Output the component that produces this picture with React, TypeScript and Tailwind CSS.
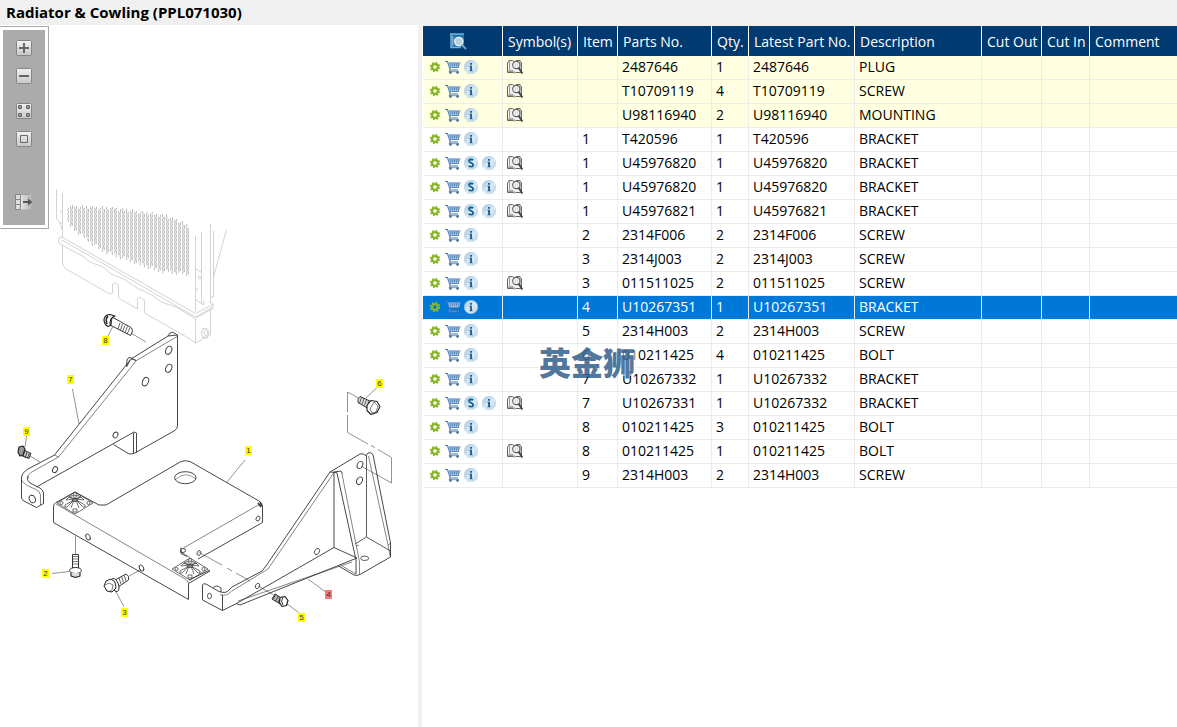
import React, { useState } from 'react';

type Part = {
  symbol?: boolean;
  superseded?: boolean;
  general?: boolean;
  item: string;
  partNo: string;
  qty: string;
  latest: string;
  description: string;
};

const parts: Part[] = [
  { general: true, symbol: true, item: '', partNo: '2487646', qty: '1', latest: '2487646', description: 'PLUG' },
  { general: true, symbol: true, item: '', partNo: 'T10709119', qty: '4', latest: 'T10709119', description: 'SCREW' },
  { general: true, symbol: true, item: '', partNo: 'U98116940', qty: '2', latest: 'U98116940', description: 'MOUNTING' },
  { item: '1', partNo: 'T420596', qty: '1', latest: 'T420596', description: 'BRACKET' },
  { symbol: true, superseded: true, item: '1', partNo: 'U45976820', qty: '1', latest: 'U45976820', description: 'BRACKET' },
  { symbol: true, superseded: true, item: '1', partNo: 'U45976820', qty: '1', latest: 'U45976820', description: 'BRACKET' },
  { symbol: true, superseded: true, item: '1', partNo: 'U45976821', qty: '1', latest: 'U45976821', description: 'BRACKET' },
  { item: '2', partNo: '2314F006', qty: '2', latest: '2314F006', description: 'SCREW' },
  { item: '3', partNo: '2314J003', qty: '2', latest: '2314J003', description: 'SCREW' },
  { symbol: true, item: '3', partNo: '011511025', qty: '2', latest: '011511025', description: 'SCREW' },
  { item: '4', partNo: 'U10267351', qty: '1', latest: 'U10267351', description: 'BRACKET' },
  { item: '5', partNo: '2314H003', qty: '2', latest: '2314H003', description: 'SCREW' },
  { item: '6', partNo: '010211425', qty: '4', latest: '010211425', description: 'BOLT' },
  { item: '7', partNo: 'U10267332', qty: '1', latest: 'U10267332', description: 'BRACKET' },
  { symbol: true, superseded: true, item: '7', partNo: 'U10267331', qty: '1', latest: 'U10267332', description: 'BRACKET' },
  { item: '8', partNo: '010211425', qty: '3', latest: '010211425', description: 'BOLT' },
  { symbol: true, item: '8', partNo: '010211425', qty: '1', latest: '010211425', description: 'BOLT' },
  { item: '9', partNo: '2314H003', qty: '2', latest: '2314H003', description: 'SCREW' },
];

const headings = ['Symbol(s)', 'Item', 'Parts No.', 'Qty.', 'Latest Part No.', 'Description', 'Cut Out', 'Cut In', 'Comment'];

const callouts = [
  { n: '8', x: 106, y: 341 },
  { n: '7', x: 71, y: 380 },
  { n: '6', x: 380, y: 384 },
  { n: '9', x: 27, y: 432 },
  { n: '1', x: 249, y: 451 },
  { n: '2', x: 46, y: 574 },
  { n: '4', x: 329, y: 595 },
  { n: '3', x: 125, y: 613 },
  { n: '5', x: 302, y: 618 },
];

const GearIcon = () => (
  <svg width="12" height="12" viewBox="0 0 12 12" fill="none">
    <circle cx="6" cy="6" r="4.4" stroke="#8cbd32" strokeWidth="1.8" strokeDasharray="1.75 1.7" />
    <circle cx="6" cy="6" r="2.9" stroke="#83b52a" strokeWidth="2.2" />
  </svg>
);

const CartIcon = () => (
  <svg width="16" height="14" viewBox="0 0 16 14" fill="none">
    <path d="M0 1.500h2.500l2.700 8.500H13" stroke="#4a78ae" strokeWidth="1.200" />
    <path d="M3 2.500h12.500L13.800 8H4.800z" fill="#c3d6ea" />
    <path d="M3 3h12.500M3.800 5h11M4.500 7.500h9.500" stroke="#5684ba" strokeWidth=".9" />
    <path d="M5.500 3v4.500M7.500 3v4.500M9.500 3v4.500M11.500 3v4.500M13.500 3v4.500" stroke="#5684ba" strokeWidth=".7" />
    <path d="M5 9.500l-1 2.200h10" stroke="#6f96c2" />
    <circle cx="5.500" cy="12.500" r="1.300" fill="#3f6ca3" />
    <circle cx="12.500" cy="12.500" r="1.300" fill="#3f6ca3" />
  </svg>
);

const InfoIcon = () => (
  <svg width="14" height="14" viewBox="0 0 14 14">
    <circle cx="7" cy="7" r="6.8" fill="url(#disc)" stroke="#a5c6de" strokeWidth=".5" />
    <path d="M6 3h2v1.800H6zM5.400 5.800H8v4.400h.6v1H5.400v-1H6V6.800h-.6z" fill="#2d6095" />
  </svg>
);

const SupersededIcon = () => (
  <svg width="14" height="14" viewBox="0 0 14 14">
    <circle cx="7" cy="7" r="6.8" fill="url(#disc)" stroke="#a5c6de" strokeWidth=".5" />
    <path d="M9.300 4.200C8.500 3.400 5 2.900 5 5c0 2 4.200 1.600 4.200 3.800 0 2.400-3.400 2.100-4.700 1.100" fill="none" stroke="#0d659d" strokeWidth="1.800" />
  </svg>
);

const BookIcon = () => (
  <svg width="16" height="16" viewBox="0 0 16 16" fill="none">
    <path d="M.5 3.500L2 2.500V1.500h3.500L7.500 3l2-1.500H13v1l1.500 1v10h-6l-1 .7-1-.7h-6z" fill="#f1f1ee" stroke="#6b6856" />
    <path d="M2.500 2v9.500H6L7.500 13M7.500 3v2M13 3v8.500M1 12.500h5" stroke="#8a887c" strokeWidth=".8" />
    <circle cx="9.300" cy="6" r="3.600" fill="#fafafa" stroke="#5c5c5c" strokeWidth="1.100" />
    <path d="M8.300 4.300v3M10.300 4.300v3" stroke="#bbb" strokeWidth=".8" />
    <path d="M11.500 8.800l4 5.700" stroke="#444" strokeWidth="1.800" />
  </svg>
);

const ViewIcon = () => (
  <svg width="17" height="17" viewBox="0 0 17 17" fill="none">
    <path d="M1 1h13v13H1z" fill="#2273a8" />
    <path d="M0 1h14M1 1v13.500h10" stroke="#6bb4dc" strokeWidth="1.500" />
    <path d="M2.800 3.500v9.500" stroke="#fff" strokeWidth="1.200" strokeDasharray="1 1" />
    <circle cx="8.800" cy="8.500" r="4.200" fill="#bccfdc" stroke="#eaf4fa" strokeWidth="1.300" />
    <path d="M12 12l4 4" stroke="#6fa6c9" strokeWidth="2" />
  </svg>
);

const ToolFace = () => <rect x="2.500" y="1.500" width="15" height="15" rx="1" fill="url(#face)" stroke="#858585" />;

const tools = [
  {
    label: 'Zoom in',
    space: 'mb-[10px]',
    icon: (
      <>
        <path d="M17 6l2.500 3-2.500 3" fill="#e4e4e4" stroke="#909090" />
        <ToolFace />
        <path d="M10 4v10M5 9h10" stroke="#666" strokeWidth="2" />
      </>
    ),
  },
  {
    label: 'Zoom out',
    space: 'mb-[17px]',
    icon: (
      <>
        <path d="M3 6L.5 9 3 12" fill="#e4e4e4" stroke="#909090" />
        <ToolFace />
        <path d="M5 9h10" stroke="#666" strokeWidth="2" />
      </>
    ),
  },
  {
    label: 'Fit to window',
    space: 'mb-[10px]',
    icon: (
      <>
        <ToolFace />
        <path d="M4.500 3.500h3v3h-3zM12.500 3.500h3v3h-3zM4.500 11.500h3v3h-3zM12.500 11.500h3v3h-3z" fill="#999" stroke="#666" />
      </>
    ),
  },
  {
    label: 'Actual size',
    space: 'mb-[45px]',
    icon: (
      <>
        <ToolFace />
        <path d="M6.500 5.500h7v7h-7z" stroke="#666" />
      </>
    ),
  },
  {
    label: 'Hide list',
    space: '',
    icon: (
      <>
        <path d="M7 1.500h12v15H7z" fill="url(#fade)" />
        <path d="M1.500 1.500h5v5h-5zM1.500 6.500h5v5h-5zM1.500 11.500h5v5h-5z" fill="#ddd" stroke="#858585" />
        <path d="M6.500 1.500h8" stroke="#999" />
        <path d="M9 9h6" stroke="#555" strokeWidth="2" />
        <path d="M14 5.500L18.500 9 14 12.500z" fill="#555" />
      </>
    ),
  },
];

const Toolbar: React.FC = () => (
  <div className="absolute left-0 top-px border border-l-0 border-[#a9a9a9] bg-white p-[3px]">
    <div className="flex h-[195px] w-[42px] flex-col items-center bg-[#ababab] pt-[9px]">
      {tools.map((t) => (
        <button key={t.label} type="button" aria-label={t.label} className={t.space}>
          <svg width="20" height="18" viewBox="0 0 20 18" fill="none">
            {t.icon}
          </svg>
        </button>
      ))}
    </div>
  </div>
);

// core columns: top and bottom edges are ragged
const edgeTop = (x: number) => (x < 120 ? 208 + (x - 68) * 0.05 : x < 165 ? 211 + (x - 120) * 0.15 : 217 + (x - 165) * 0.45);
const edgeBottom = (x: number) => (x < 100 ? 222 + (x - 68) * 0.78 : x < 160 ? 247 + (x - 100) * 0.36 : 268 + (x - 160) * 0.14);

// neighbouring columns zigzag against each other, which closes the cells
const core = Array.from({ length: 61 }, (_, i) => {
  const x = 68.5 + i * 2;
  const top = Math.round(edgeTop(x) - ((i * 7) % 5) * 0.9);
  const bottom = Math.round(edgeBottom(x) + ((i * 11) % 7) * 0.8);
  const lean = i % 2 ? 1 : -1;
  let d = `M${x} ${top}`;
  for (let y = Math.ceil(top / 4) * 4; y + 4 < bottom; y += 4) {
    d += `L${x} ${y}L${x + lean * 0.6} ${y + 2}`;
  }
  return `${d}L${x} ${bottom}`;
}).join('');

const Rosette = ({ x, y }: { x: number; y: number }) => (
  <g transform={`translate(${x} ${y})`} strokeWidth=".7">
    <path d="M-18 1L0-10 18 1 0 12z" />
    <path d="M-1-2L-8 5Q-11 6-10 3zM-1-2L-4 6M1-2L4 6M1-2L8 5Q11 6 10 3zM-2-3L-9-2-6-5zM2-3L9-2 6-5z" />
    <path d="M-6-5L-2-7 0-3zM6-5L2-7 0-3z" fill="#ddd" />
    <ellipse cx="0" cy="-2" rx="3" ry="1.500" fill="#888" />
    <circle cx="0" cy="-8" r="1.500" fill="#fff" />
    <circle cx="-13.500" cy="1" r="1.600" fill="#fff" />
    <circle cx="13.500" cy="1" r="1.600" fill="#fff" />
    <path d="M-2 7h4v3h-4z" fill="#fff" />
  </g>
);

const Drawing: React.FC = () => (
  <svg className="block h-auto w-full" viewBox="0 25 418 702" fill="none" role="img" aria-label="Exploded view">
    <g stroke="#cecece" strokeWidth=".9">
      <path d={core} stroke="#ababab" strokeWidth=".8" />
      <path d="M56.500 189V219L62 224M62.500 193V237M61 210v3M60 222l2 8" />
      <path d="M62 237L59 238Q58 241 59 243L62 245 84 257 90 262 103 267 111 274 124 279 137 288 152 295 161 302 176 307 195 318.500 213 308.500V304L209 302M62 237L195.500 313.500 214 304M62 240L195.500 317 213 307" />
      <path d="M62.500 245V264L66 269 110 294 112.500 293V284Q115 281 118.500 286V298L137.500 309V299Q140 295 144.500 301V313L190 339 195.500 343 210.500 335V310M195.500 319V343" />
      <path d="M195.500 236V312M201.500 232V303M210.500 224V303M213.500 231V297H211M196 269l5 3M196 300l8 5V300M197 288v3M226.500 229.500L213.500 277" />
      <circle cx="199.500" cy="277.500" r="1.300" />
      <ellipse cx="205" cy="333" rx="3.500" ry="4.500" />
      <ellipse cx="206" cy="333" rx="2" ry="2.800" />
      <path d="M202 329l5-1M202 337l6 1" />
    </g>

    <g stroke="#777" strokeWidth=".8">
      <path d="M112.500 327L108 336M131 333L146 342M72.500 389L79 424M26.500 436L25 447M30 456L40 462M245 460L226.500 482.500M75.500 536V554M52 573.500L69 571.500M129 576L141 569.500M116 592L124 606.500M286 603L298.500 612.500M308 579L325 591.500M377.500 387L366 398" />
      <path d="M199 552.500L222 565M227 568l5 3M236 573L250 581M258 586L273 594.500M347.500 392v20M347.500 415v17.500M347.500 392l11 6" />
      <path d="M347.500 432.500L368 444M371 445.500l4 2M378 449.500L391.500 457.500V483L361 466" />
    </g>

    {/* left side bracket */}
    <g stroke="#333" strokeWidth=".9" strokeLinejoin="round">
      <path d="M177.500 335V426Q177.500 429 174 431L134 453.500 129 454 113.500 444.500M36.500 487L134 432 136.500 433V452.500M133.500 433V453" />
      <path d="M177.500 335L168 336 131 359 54.500 455 28 469Q21.500 473 21.500 478V498Q22 500 24 501L36.500 507.500 43.500 503.500V493Q43 490 40 488L30 483Q26 480 28 476" />
      <path d="M177 336.500L136.500 360.500 58.500 457 31 472.500Q27 475 27.500 479M131 359l5.500 1.500M54.500 455l4 2M21.500 480Q24 485 35 489 40 491 40.500 495V505" strokeWidth=".6" />
      <path d="M168 336L170 333Q172 331 175 333.500L177.500 335M126.500 366L127 360Q128 357 130 357.500L136 360.500M126.500 367L130 360" />
      <g strokeWidth=".9">
        <ellipse cx="168.700" cy="350.300" rx="2.900" ry="4.300" transform="rotate(25 168.700 350.300)" />
        <ellipse cx="168.700" cy="368.300" rx="2.900" ry="4.300" transform="rotate(25 168.700 368.300)" />
        <ellipse cx="145.500" cy="381.700" rx="2.900" ry="4.500" transform="rotate(25 145.500 381.700)" />
        <ellipse cx="115.500" cy="435" rx="2.300" ry="3" transform="rotate(30 115.500 435)" />
        <ellipse cx="55" cy="469.700" rx="2.300" ry="3.200" transform="rotate(30 55 469.700)" />
        <ellipse cx="32.300" cy="499" rx="3" ry="4" transform="rotate(-20 32.300 499)" />
      </g>
    </g>

    {/* base plate */}
    <g stroke="#333" strokeWidth=".9" strokeLinejoin="round">
      <path d="M75 492L99 505H106L181 461.500Q185 460 190 461.500L259 501Q262.500 503 262.500 507V522.500L198 559M75 492L56 502.500Q53.500 504 53.500 507V522.500L188.500 599.500V583.500L210 571" />
      <path d="M56 504L186 579.500 188.500 583M183.500 548L260 504M180 551.500L190 557.500" strokeWidth=".6" />
      <path d="M181 547.500v6l6 3" />
      <ellipse cx="185.300" cy="477.700" rx="10.700" ry="6" />
      <path d="M175 480Q185 470 196 479" strokeWidth=".5" />
      <ellipse cx="88" cy="537" rx="2" ry="3.200" transform="rotate(-25 88 537)" />
      <ellipse cx="141.500" cy="568" rx="2" ry="3.200" transform="rotate(-25 141.500 568)" />
      <ellipse cx="199" cy="553" rx="1.800" ry="2.500" transform="rotate(25 199 553)" strokeWidth=".8" />
      <ellipse cx="258" cy="518.500" rx="1.800" ry="2.600" transform="rotate(25 258 518.500)" strokeWidth=".8" />
      <ellipse cx="183" cy="550.500" rx="2.500" ry="2" />
      <path d="M258 503l3 4M260 502l2 4" strokeWidth="1.500" />
      <Rosette x={75} y={502} />
      <Rosette x={190} y={568} />
      <path d="M189 580l21-10" />
    </g>

    {/* right side bracket */}
    <g stroke="#333" strokeWidth=".9" strokeLinejoin="round">
      <path d="M202.500 600V585Q203 583 206 584L219 591.500Q226 594 229 590L232 587 262 571 266 566 330 472 360 454Q363 453 366 455.500L368 453Q370 451.500 373 454.500L390.500 543V557L360 574.500Q357 576 354 575L338.500 566" />
      <path d="M202.500 600L222.500 610.500 236.500 603.500 334 547.500 357 558 240 605 236 603.500M222.500 595V610.500M334 472V547.500" />
      <path d="M232 591L268 569 334 472.500M220 594.500Q227 597 232 590.500M238 601L352 562" strokeWidth=".6" />
      <path d="M330 472L337 472.500M337 473L356 560V574M334 472L341 471 342.500 474" />
      <path d="M342 474L359.500 562V574M368.500 456L388 545 390 556M356 546l3-1M388 545l3-2M342 566l14 8" strokeWidth=".6" />
      <path d="M366.500 455V537L390.500 551M366.500 537L355 544" strokeWidth=".8" />
      <ellipse cx="360" cy="465" rx="2.700" ry="3.700" transform="rotate(25 360 465)" />
      <ellipse cx="359.500" cy="480.700" rx="2.700" ry="3.900" transform="rotate(25 359.500 480.700)" />
      <ellipse cx="317" cy="551.500" rx="2.300" ry="3.300" transform="rotate(30 317 551.500)" strokeWidth=".8" />
      <ellipse cx="257.500" cy="586" rx="2" ry="2.800" transform="rotate(30 257.500 586)" strokeWidth=".8" />
      <ellipse cx="209.500" cy="596" rx="2" ry="2.800" strokeWidth=".8" />
      <ellipse cx="364.700" cy="558.300" rx="4" ry="2.200" strokeWidth=".8" />
      <path d="M213 588Q216 584 221 588v4" />
    </g>

    {/* fasteners */}
    <g stroke="#222" strokeWidth=".9" strokeLinejoin="round">
      <path d="M112 317L131 327.500Q134 330 130.500 335.500L111 325.500z" fill="#fff" />
      <path d="M120 323l-2 6M122.500 324l-2 6M125 325.500l-2.500 6M127.500 326.500l-2.500 6M130 328l-3 6" strokeWidth=".7" />
      <path d="M110 314.500q-5 0-6 5 0 5 4 7l2.500-1Q109 320 113 317l2-1z" fill="#fff" strokeWidth="1.200" />
      <path d="M108 316q-3 3-1 8" strokeWidth="1.600" />
      <path d="M22 449l9 4.500-2 5-8-3z" fill="#ccc" />
      <path d="M25 451l-2 5M27 452l-2 6M29.500 453l-2 5" strokeWidth=".8" />
      <path d="M19 447l4-1 2 3-2 6-3 1-2-4z" fill="#999" strokeWidth="1.200" />
      <path d="M72.500 554.500h6V568h-6z" fill="#fff" />
      <path d="M72.500 556.500h6M72.500 559h6M72.500 561.500h6M72.500 564h6" strokeWidth=".6" />
      <ellipse cx="75.500" cy="570.500" rx="6" ry="3" fill="#fff" />
      <path d="M71 573v3l4.500 1.500L80 576v-3" fill="#ddd" strokeWidth="1.100" />
      <path d="M115 580L126 574Q130 576 128.500 580L118 587z" fill="#fff" />
      <path d="M119 578l2 6M121.500 576.500l2 6M124 575l2 6" strokeWidth=".7" />
      <ellipse cx="115" cy="585" rx="3.500" ry="6.800" transform="rotate(-20 115 585)" fill="#fff" />
      <path d="M106 581l5-2 4 3 1 6-4 4-5-1-3-5z" fill="#fff" strokeWidth="1" />
      <path d="M105 585l4-2 4 2-1 5-3 2" strokeWidth=".6" />
      <path d="M275 594l8 5-3 5-8-5z" fill="#bbb" />
      <path d="M276 594l-3 5M278.500 596l-3 5M281 597l-3 5" strokeWidth=".8" />
      <path d="M280 597.500l5-1 3 4-1.500 5-4.500 1-2.500-4z" fill="#fff" strokeWidth="1.200" />
      <path d="M283 597q-3 4 0 8" />
      <path d="M360 396.500l11 5-3 7-10-6q-1-4 2-6z" fill="#ddd" />
      <path d="M361.500 397.500l-2 6M364 398.500l-2 6M366.500 399.500l-2 6M369 401l-2.500 6" strokeWidth=".7" />
      <path d="M371 400.500l6 1 3 5-3 6-6 2-4-4v-5z" fill="#fff" strokeWidth="1.100" />
      <path d="M374 402l4 4-2 6-4 1-2-4z" strokeWidth=".6" />
    </g>

    {callouts.map((c) => (
      <g key={c.n}>
        <rect x={c.x - 4} y={c.y - 5} width="7" height="9" className={c.n === '4' ? 'fill-[#f47c7c]' : 'fill-[#ffff00]'} />
        <text x={c.x - 0.5} y={c.y + 2} textAnchor="middle" className="fill-[#333] font-['Liberation_Sans',sans-serif] text-[8px]">
          {c.n}
        </text>
      </g>
    ))}
  </svg>
);

const PartsTable: React.FC = () => {
  const [selected, setSelected] = useState(10);

  return (
    <table className="w-full table-fixed border-separate border-spacing-0 text-left text-sm">
      <colgroup>
        <col className="w-[80px]" />
        <col className="w-[75px]" />
        <col className="w-[40px]" />
        <col className="w-[94px]" />
        <col className="w-[37px]" />
        <col className="w-[106px]" />
        <col className="w-[127px]" />
        <col className="w-[60px]" />
        <col className="w-[48px]" />
        <col />
      </colgroup>
      <thead>
        <tr className="h-[30px] bg-[#003a70] text-white">
          <th className="border-r border-white p-0">
            <button type="button" aria-label="View columns" className="ml-[27px] block">
              <ViewIcon />
            </button>
          </th>
          {headings.map((h) => (
            <th key={h} className="whitespace-nowrap border-r border-white p-0 pl-[5px] pt-[2px] font-normal last:border-r-0">
              {h}
            </th>
          ))}
        </tr>
      </thead>
      <tbody>
        {parts.map((p, i) => {
          const active = i === selected;
          const bg = active ? 'bg-[#0078d7] text-white' : p.general ? 'bg-[#ffffe1] text-black' : 'bg-white text-black';
          const cell = 'h-6 whitespace-nowrap border-b border-r border-[#ececec] p-0 pb-[2px] pl-1 leading-5 last:border-r-0';
          return (
            <tr key={i} className={bg} onClick={() => setSelected(i)}>
              <td className={cell}>
                <div className="flex items-center gap-1 pl-[2px]">
                  <button type="button" aria-label="Options"><GearIcon /></button>
                  <button type="button" aria-label="Add to cart" className="-mr-px"><CartIcon /></button>
                  {p.superseded && <button type="button" aria-label="Supersession"><SupersededIcon /></button>}
                  <button type="button" aria-label="Information"><InfoIcon /></button>
                </div>
              </td>
              <td className={cell}>{p.symbol && <BookIcon />}</td>
              <td className={cell}>{p.item}</td>
              <td className={cell}>{p.partNo}</td>
              <td className={cell}>{p.qty}</td>
              <td className={cell}>{p.latest}</td>
              <td className={cell}>{p.description}</td>
              <td className={cell} />
              <td className={cell} />
              <td className={cell} />
            </tr>
          );
        })}
      </tbody>
    </table>
  );
};

const App: React.FC = () => {
  return (
    <div className="flex min-h-screen flex-col bg-[#f0f0f0] font-['Open_Sans','Noto_Sans',sans-serif]">
      <svg className="absolute" width="0" height="0" aria-hidden="true">
        <defs>
          <linearGradient id="disc" x1="0" y1="0" x2="1" y2="1">
            <stop offset="0" stopColor="#9fc4df" />
            <stop offset=".55" stopColor="#dcebf5" />
            <stop offset="1" stopColor="#b4d3e8" />
          </linearGradient>
          <linearGradient id="face" x1="0" y1="0" x2="0" y2="1">
            <stop offset="0" stopColor="#f2f2f2" />
            <stop offset="1" stopColor="#c8c8c8" />
          </linearGradient>
          <linearGradient id="fade">
            <stop offset="0" stopColor="#e4e4e4" />
            <stop offset="1" stopColor="#ababab" />
          </linearGradient>
        </defs>
      </svg>
      <header className="px-[6px]">
        <h1 className="text-[15px] font-bold leading-[25px] text-black">Radiator &amp; Cowling (PPL071030)</h1>
      </header>
      <main className="grid flex-1 grid-cols-[minmax(0,418fr)_4px_minmax(0,755fr)]">
        <section className="relative bg-white">
          <Drawing />
          <Toolbar />
        </section>
        <div />
        <section className="relative border-t border-[#f0f0f0] bg-white pl-px">
          <PartsTable />
          <div className="pointer-events-none absolute left-[117px] top-[320px] bg-white/50 font-['Noto_Sans_CJK_SC',sans-serif] text-[32px] font-black leading-[30px] text-[#1f5183]/80">
            英金狮
          </div>
        </section>
      </main>
    </div>
  );
};

export default App;
